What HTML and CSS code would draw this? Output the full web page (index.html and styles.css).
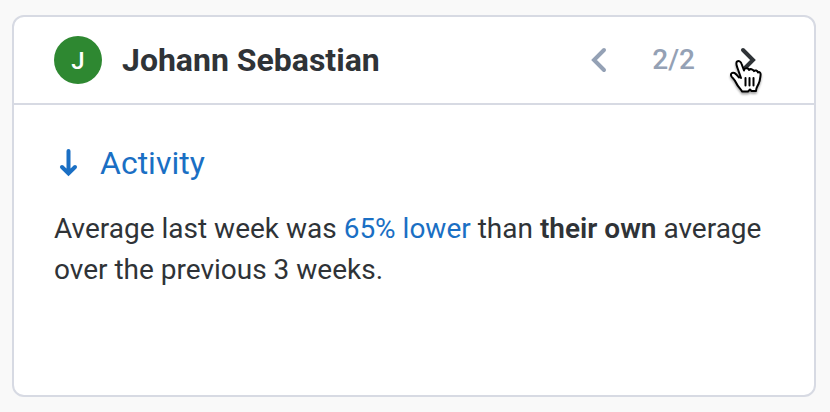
FILE: index.html
```html
<!DOCTYPE html>
<html lang="en">
<head>
	<meta charset="UTF-8">
	<title>Johann Sebastian</title>
	<link rel="stylesheet" href="styles.css">
</head>
<body>
	<div class="card">
		<div class="card_head">
			<span class="avatar">J</span>
			<h1 class="name">Johann Sebastian</h1>
			<div class="pager">
				<button type="button" class="prev" aria-label="Previous">
					<svg width="24" height="28" viewBox="0 0 24 28"><path d="M17 4L7 14l10 10"/></svg>
				</button>
				<span class="count">2/2</span>
				<button type="button" class="next" aria-label="Next">
					<svg width="24" height="28" viewBox="0 0 24 28"><path d="M7 4l10 10L7 24"/></svg>
					<svg class="hand" width="34" height="36" viewBox="0 0 34 36">
						<path d="M12 19L8.500 9C7.500 6 6.500 4 8 2.600C10 1.200 12 3 12.600 5L15 11.500C15 9 19 8.500 20 11C21 9.500 24 10 25 12.200C26 10.800 28.500 11.500 29 13.500C30.500 12.500 32 14 31.500 16.500C31 21 31 22 29.500 25C28 28 27 29 27 32L22.500 32L21 30.500L19 32.500L13 32.500C12 30 9 28 7.500 24.500C6 21 4 19.500 2.500 17.500C1 15 3 13 5.500 14C7.500 15 8.500 17 10 18.500"/>
						<path d="M16.500 19v7.500M20.500 19v7.500M24.500 19v7.500"/>
					</svg>
				</button>
			</div>
		</div>
		<div class="card_body">
			<h2 class="title">
				<svg width="28" height="32" viewBox="0 0 28 32"><path d="M14.500 4v22M8 20l6.500 6.500L21 20"/></svg>
				Activity
			</h2>
			<p class="text">Average last week was <span class="lower">65% lower</span> than <strong>their own</strong> average over the previous 3 weeks.</p>
		</div>
	</div>
</body>
</html>
```
FILE: styles.css
```css
*{box-sizing: border-box;}
body{margin: 0; padding: 15px 14px 15px 12px; min-height: 100vh; display: flex; background-color: #f9f9f9; font-family: Roboto, sans-serif; color: #2f3337;}
h1,h2,p{margin: 0;}
svg{display: block; fill: none; stroke: currentColor; stroke-width: 4; stroke-linecap: round; stroke-linejoin: miter;}

.card{flex: 1; border: 2px solid #d7dae3; border-radius: 12px; background-color: white;}

/* header */
.card_head{display: flex; align-items: center; gap: 20px; padding: 19px 54px 19px 40px; border-bottom: 2px solid #d7dae3;}
.avatar{width: 48px; height: 48px; border-radius: 50%; background-color: #2e8831; color: white; font-size: 24px; font-weight: 500; line-height: 50px; text-align: center;}
.name{font-size: 32px; line-height: 48px; font-weight: 700;}

.pager{display: flex; align-items: center; gap: 41px; margin-left: auto; color: #94a1b5;}
.pager button{position: relative; padding: 0; border: none; background: none; color: inherit; cursor: pointer;}
.pager .next{color: #2f3337;}
.count{font-size: 28px; line-height: 48px; font-weight: 500;}

/* pointer on top of the next arrow */
.hand{position: absolute; left: -7px; top: 13px; fill: white; stroke: black; stroke-width: 2; stroke-linejoin: round; filter: drop-shadow(0 2px 1px rgba(0,0,0,.35));}

/* content */
.card_body{padding: 38px 40px;}
.title{display: flex; align-items: center; gap: 18px; margin-bottom: 25px; font-size: 32px; line-height: 40px; font-weight: 400; color: #1a6fc4;}
.text{font-size: 28px; line-height: 41px;}
.lower{color: #1a6fc4;}
strong{font-weight: 600;}
```
